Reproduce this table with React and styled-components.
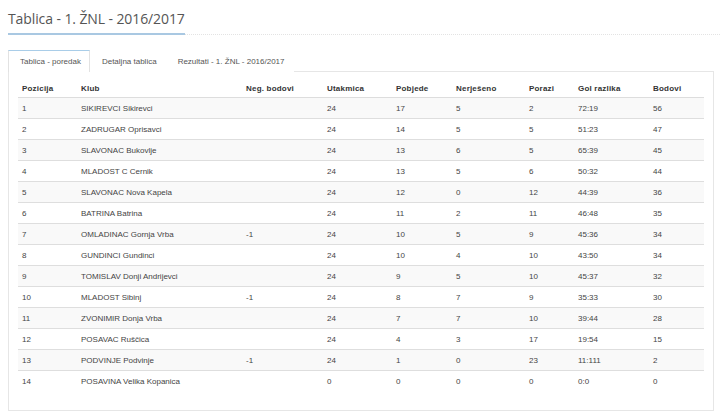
import React from "react";
import styled, { createGlobalStyle } from "styled-components";

const GlobalStyle = createGlobalStyle`
  body {
    margin: 0;
    background: #fff;
    font-family: "Liberation Sans", Arial, sans-serif;
  }
`;

const Page = styled.div`
  padding: 8px 6px 0 8px;
`;

const TitleRow = styled.div`
  display: flex;
  align-items: flex-end;
  border-bottom: 1px dotted #e3e3e3;
  margin-right: -6px;
`;

const Title = styled.h1`
  margin: 0 0 -1px;
  padding: 0 0 3px;
  font-family: "Open Sans", sans-serif;
  font-weight: 400;
  font-size: 14px;
  letter-spacing: -0.1px;
  line-height: 22px;
  color: #555;
  border-bottom: 2px solid #a9c8e2;
`;

const Tabs = styled.div`
  display: flex;
  margin-top: 15px;
`;

const Tab = styled.div`
  padding: 0 8px 0 11px;
  height: 21px;
  line-height: 21px;
  font-size: 8px;
  color: #555;
  border: 1px solid ${(p) => (p.$active ? "#e2e2e2" : "transparent")};
  border-top-color: ${(p) => (p.$active ? "#a9cde8" : "transparent")};
  border-bottom: none;
  background: #fff;
  margin-bottom: -1px;
  position: relative;
  z-index: 1;
`;

const Panel = styled.div`
  border: 1px solid #e6e6e6;
  padding: 7px 10px 18px 9px;
`;

const Table = styled.table`
  width: 100%;
  border-collapse: collapse;
  table-layout: fixed;
  font-size: 8px;
  color: #444;
`;

const Th = styled.th`
  text-align: left;
  font-weight: bold;
  color: #333;
  height: 18px;
  padding: 0 4px;
  border-bottom: 1px solid #ddd;
  letter-spacing: 0.2px;
`;

const Row = styled.tr`
  background: ${(p) => (p.$odd ? "#f9f9f9" : "#fff")};
  border-bottom: 1px solid ${(p) => (p.$last ? "transparent" : "#dedede")};
`;

const Td = styled.td`
  height: 20px;
  padding: 0 4px;
  white-space: nowrap;
`;

const cols = [
  ["Pozicija", 59],
  ["Klub", 165],
  ["Neg. bodovi", 81],
  ["Utakmica", 69],
  ["Pobjede", 60],
  ["Nerješeno", 73],
  ["Porazi", 49],
  ["Gol razlika", 75],
  ["Bodovi", 55],
];

const rows = [
  [1, "SIKIREVCI Sikirevci", "", 24, 17, 5, 2, "72:19", 56],
  [2, "ZADRUGAR Oprisavci", "", 24, 14, 5, 5, "51:23", 47],
  [3, "SLAVONAC Bukovlje", "", 24, 13, 6, 5, "65:39", 45],
  [4, "MLADOST C Cernik", "", 24, 13, 5, 6, "50:32", 44],
  [5, "SLAVONAC Nova Kapela", "", 24, 12, 0, 12, "44:39", 36],
  [6, "BATRINA Batrina", "", 24, 11, 2, 11, "46:48", 35],
  [7, "OMLADINAC Gornja Vrba", "-1", 24, 10, 5, 9, "45:36", 34],
  [8, "GUNDINCI Gundinci", "", 24, 10, 4, 10, "43:50", 34],
  [9, "TOMISLAV Donji Andrijevci", "", 24, 9, 5, 10, "45:37", 32],
  [10, "MLADOST Sibinj", "-1", 24, 8, 7, 9, "35:33", 30],
  [11, "ZVONIMIR Donja Vrba", "", 24, 7, 7, 10, "39:44", 28],
  [12, "POSAVAC Ruščica", "", 24, 4, 3, 17, "19:54", 15],
  [13, "PODVINJE Podvinje", "-1", 24, 1, 0, 23, "11:111", 2],
  [14, "POSAVINA Velika Kopanica", "", 0, 0, 0, 0, "0:0", 0],
];

const App = () => {
  return (
    <Page>
      <GlobalStyle />
      <TitleRow>
        <Title>Tablica - 1. ŽNL - 2016/2017</Title>
      </TitleRow>

      <Tabs>
        <Tab $active>Tablica - poredak</Tab>
        <Tab>Detaljna tablica</Tab>
        <Tab>Rezultati - 1. ŽNL - 2016/2017</Tab>
      </Tabs>

      <Panel>
        <Table>
          <colgroup>
            {cols.map(([name, w]) => (
              <col key={name} style={{ width: w }} />
            ))}
          </colgroup>
          <thead>
            <tr>
              {cols.map(([name]) => (
                <Th key={name}>{name}</Th>
              ))}
            </tr>
          </thead>
          <tbody>
            {rows.map((r, i) => (
              <Row key={r[0]} $odd={i % 2 === 0} $last={i === rows.length - 1}>
                {r.map((c, j) => (
                  <Td key={j}>{c}</Td>
                ))}
              </Row>
            ))}
          </tbody>
        </Table>
      </Panel>
    </Page>
  );
};

export default App;
